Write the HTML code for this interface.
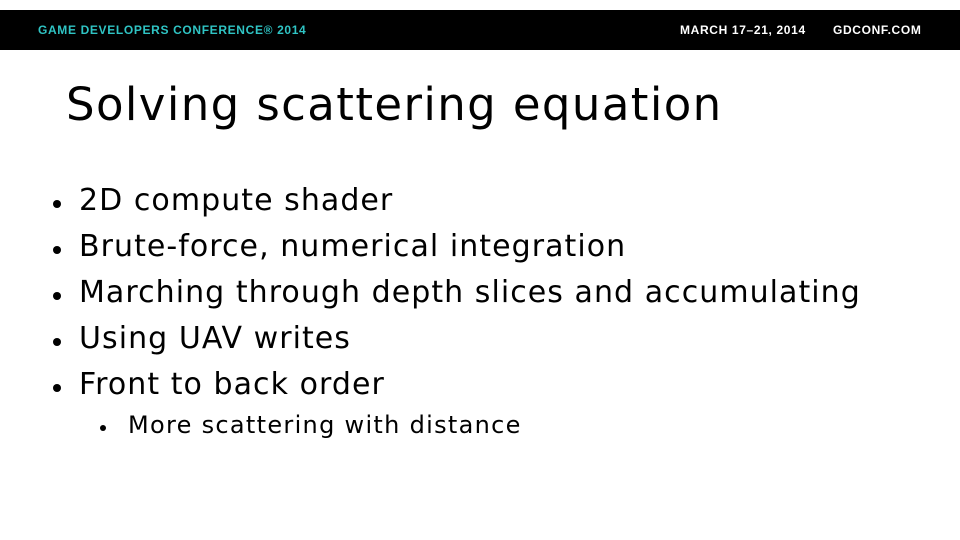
<!DOCTYPE html>
<html><head><style>
body{margin:0;width:960px;height:540px;background:#fff;position:relative;overflow:hidden;font-family:"DejaVu Sans","Liberation Sans",sans-serif;color:#000}
.bar{position:absolute;left:0;top:10px;width:960px;height:40px;background:#000}
.bar span{position:absolute;top:13px;font:bold 12px "Liberation Sans",sans-serif;letter-spacing:0.65px}
h1{position:absolute;left:66px;top:78px;margin:0;font-weight:normal;font-size:45px;letter-spacing:1.4px;white-space:nowrap}
.b{position:absolute;left:79px;font-size:30px;letter-spacing:1.05px;white-space:nowrap}
.b:before{content:"";position:absolute;left:-26px;top:50%;width:8px;height:8px;border-radius:50%;background:#000;margin-top:-1px}
.s{position:absolute;left:128px;font-size:24px;letter-spacing:1.3px;white-space:nowrap}
.s:before{content:"";position:absolute;left:-28px;top:50%;width:6px;height:6px;border-radius:50%;background:#000;margin-top:0}
</style></head><body>
<div class="bar"><span style="left:38px;color:#2fc4c4">GAME DEVELOPERS CONFERENCE® 2014</span><span style="left:680px;color:#fff">MARCH 17–21, 2014</span><span style="left:833px;color:#fff">GDCONF.COM</span></div>
<h1>Solving scattering equation</h1>
<div class="b" style="top:183px">2D compute shader</div>
<div class="b" style="top:229px">Brute-force, numerical integration</div>
<div class="b" style="top:275px">Marching through depth slices and accumulating</div>
<div class="b" style="top:321px">Using UAV writes</div>
<div class="b" style="top:367px">Front to back order</div>
<div class="s" style="top:411px">More scattering with distance</div>
</body></html>
